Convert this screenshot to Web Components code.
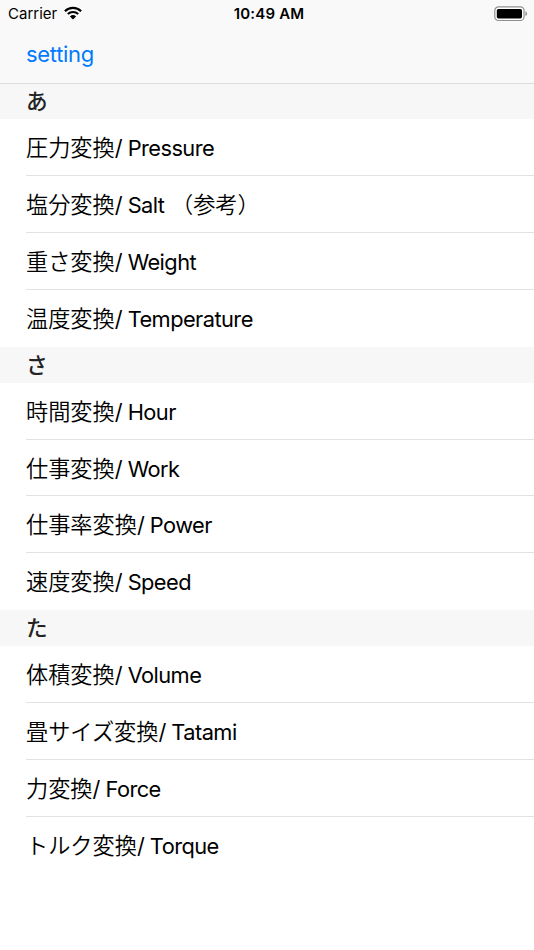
<!DOCTYPE html>
<html lang="ja">
<head>
<meta charset="utf-8">
<meta name="viewport" content="width=device-width, initial-scale=1">
<title>Unit converter</title>
<style>
  body {
    margin: 0;
    background: #fff;
    color: #000;
    font-family: Inter, "Noto Sans CJK JP", sans-serif;
  }
</style>
</head>
<body>
<converter-app>
  <status-bar slot="top" carrier="Carrier" time="10:49 AM"></status-bar>
  <nav-bar slot="top">setting</nav-bar>

  <list-section heading="あ">
    <list-row>圧力変換/ Pressure</list-row>
    <list-row>塩分変換/ Salt （参考）</list-row>
    <list-row>重さ変換/ Weight</list-row>
    <list-row>温度変換/ Temperature</list-row>
  </list-section>
  <list-section heading="さ">
    <list-row>時間変換/ Hour</list-row>
    <list-row>仕事変換/ Work</list-row>
    <list-row>仕事率変換/ Power</list-row>
    <list-row>速度変換/ Speed</list-row>
  </list-section>
  <list-section heading="た">
    <list-row>体積変換/ Volume</list-row>
    <list-row>畳サイズ変換/ Tatami</list-row>
    <list-row>力変換/ Force</list-row>
    <list-row>トルク変換/ Torque</list-row>
  </list-section>
</converter-app>

<script>
(function () {
  function define(name, html, setup) {
    var template = document.createElement('template');
    template.innerHTML = html;

    window.customElements.define(name, class extends HTMLElement {
      constructor() {
        super();
        this.attachShadow({ mode: 'open' });
        this.shadowRoot.appendChild(template.content.cloneNode(true));
      }

      connectedCallback() {
        if (setup) setup(this, this.shadowRoot);
      }
    });
  }

  define('converter-app', `
    <style>
      :host { display: block; height: 950px; overflow: hidden; }
      /* the hairline lies over the top edge of the first section */
      header {
        position: relative;
        z-index: 1;
        box-sizing: border-box;
        height: 84px;
        margin-bottom: -0.65px;
        background: #f9f9f9;
        border-bottom: 1px solid #dcdcdc;
      }
    </style>
    <header><slot name="top"></slot></header>
    <main><slot></slot></main>
  `);

  define('status-bar', `
    <style>
      :host {
        display: grid;
        grid-template-columns: 1fr auto 1fr;
        align-items: center;
        height: 27px;
        padding: 0 6px 0 8px;
        font-size: 15px;
      }
      .left { display: flex; align-items: center; gap: 7px; }
      .left svg { margin-bottom: 1px; }
      .time { padding-left: 2px; font-weight: 600; letter-spacing: 0.2px; }
      .battery { justify-self: end; }
      svg { display: block; }
    </style>
    <div class="left">
      <span class="carrier"></span>
      <svg width="18" height="14" viewBox="0 0 18 14" fill="none">
        <path d="M.9 5.2a11.6 11.6 0 0 1 16.2 0M3.8 8.1a7.4 7.4 0 0 1 10.4 0" stroke="#000" stroke-width="2.1"/>
        <path d="M9 13.5 5.9 10.4a4.5 4.5 0 0 1 6.2 0z" fill="#000"/>
      </svg>
    </div>
    <span class="time"></span>
    <svg class="battery" width="34" height="16" viewBox="0 0 34 16">
      <rect x="0.8" y="0.9" width="29.2" height="13.6" rx="3.6" fill="#fff" stroke="#909090" stroke-width="1.2"/>
      <rect x="2.8" y="3" width="25.2" height="9.4" rx="1.6" fill="#000"/>
      <path d="M31.4 5.3q1.7.7 1.7 2.4t-1.7 2.4z" fill="#909090"/>
    </svg>
  `, function (host, root) {
    root.querySelector('.carrier').textContent = host.getAttribute('carrier');
    root.querySelector('.time').textContent = host.getAttribute('time');
  });

  define('nav-bar', `
    <style>
      :host { display: flex; align-items: center; height: 54px; padding-left: 26px; }
      a { color: #007aff; font-size: 22px; letter-spacing: -0.3px; }
    </style>
    <a><slot></slot></a>
  `);

  define('list-section', `
    <style>
      :host { display: block; }
      h2 {
        display: flex;
        align-items: center;
        box-sizing: border-box;
        height: 36px;
        margin: 0;
        padding: 0 0 3px 26px;
        background: #f7f7f7;
        color: #232323;
        font-size: 21.6px;
        font-weight: 500;
      }
    </style>
    <h2></h2>
    <slot></slot>
  `, function (host, root) {
    root.querySelector('h2').textContent = host.getAttribute('heading');
  });

  define('list-row', `
    <style>
      :host {
        display: flex;
        align-items: baseline;
        box-sizing: border-box;
        height: 56.85px;
        margin-left: 26px;
        border-bottom: 1px solid #e2e2e2;
        font-size: 22.2px;
        line-height: 54px;
        white-space: pre;
      }
      :host(:last-child) { border-bottom-color: transparent; }
      .name, .note { font-family: "Noto Sans CJK JP", sans-serif; font-weight: 350; }
      .latin { font-size: 21.8px; letter-spacing: -0.55px; }
      .note { margin-left: 1px; }
    </style>
    <span class="name"></span><span class="latin"></span><span class="note"></span>
  `, function (host, root) {
    // name, latin label starting at the slash, optional note in full-width brackets
    var parts = host.textContent.match(/^([^/]*)(\/[^（]*)(.*)$/);
    root.querySelector('.name').textContent = parts[1];
    root.querySelector('.latin').textContent = parts[2];
    root.querySelector('.note').textContent = parts[3];
  });
})();
</script>
</body>
</html>
